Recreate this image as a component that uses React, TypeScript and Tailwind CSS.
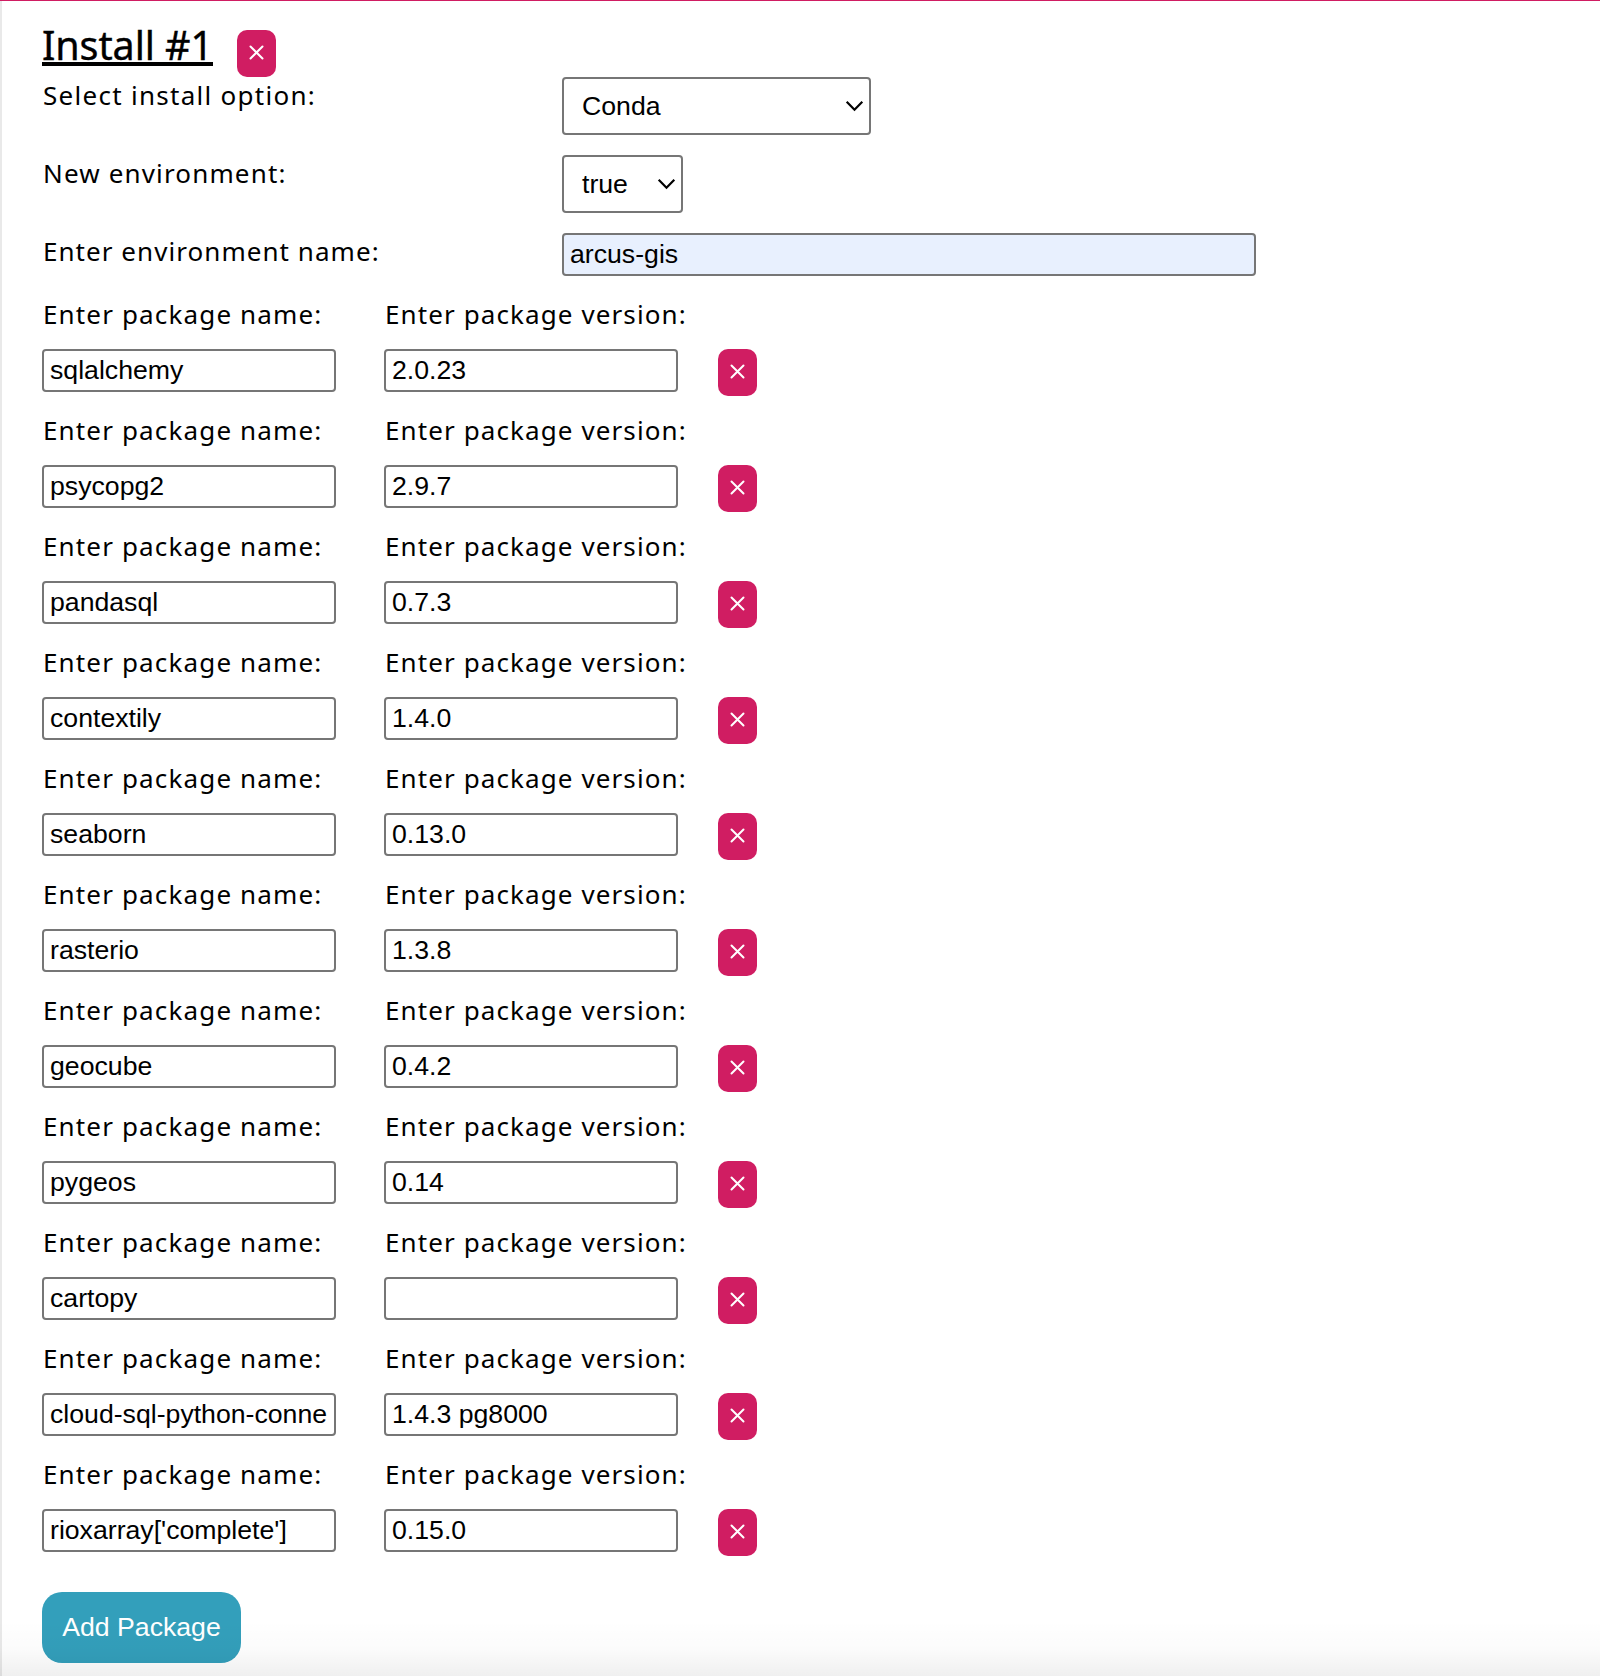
import { useState } from 'react';

type Pkg = { name: string; version: string };

const initialPackages: Pkg[] = [
  { name: 'sqlalchemy', version: '2.0.23' },
  { name: 'psycopg2', version: '2.9.7' },
  { name: 'pandasql', version: '0.7.3' },
  { name: 'contextily', version: '1.4.0' },
  { name: 'seaborn', version: '0.13.0' },
  { name: 'rasterio', version: '1.3.8' },
  { name: 'geocube', version: '0.4.2' },
  { name: 'pygeos', version: '0.14' },
  { name: 'cartopy', version: '' },
  { name: 'cloud-sql-python-conne', version: '1.4.3 pg8000' },
  { name: "rioxarray['complete']", version: '0.15.0' },
];

const control =
  "rounded-[4px] border-2 border-[#767676] text-black outline-none font-['Liberation_Sans',Arial,sans-serif] text-[26.67px]";

function RemoveButton({ onClick }: { onClick?: () => void }) {
  return (
    <button
      type="button"
      aria-label="Remove"
      onClick={onClick}
      className="flex h-[47px] w-[39px] shrink-0 items-center justify-center rounded-[10px] bg-[#d01d62] text-white"
    >
      <svg width="15" height="15" viewBox="0 0 15 15" fill="none" stroke="currentColor" strokeWidth="2" strokeLinecap="round" className="-mt-0.5">
        <path d="M1.5 1.5L13.5 13.5M13.5 1.5L1.5 13.5" />
      </svg>
    </button>
  );
}

function Select({ value, className }: { value: string; className: string }) {
  return (
    <div className={`flex h-[58px] items-center justify-between bg-white pl-[18px] pr-[5px] ${control} ${className}`}>
      <span className="leading-[30px]">{value}</span>
      <svg width="19" height="12" viewBox="0 0 19 12" fill="none" stroke="currentColor" strokeWidth="2.2" className="-mt-px">
        <path d="M1.7 1.7L9.5 9.7L17.3 1.7" />
      </svg>
    </div>
  );
}

function Input({ value, className }: { value: string; className: string }) {
  return (
    <div className={`h-[43px] px-[6px] ${control} ${className}`}>
      <div className="h-[39px] whitespace-nowrap leading-[39px]">{value}</div>
    </div>
  );
}

export default function App() {
  const [packages, setPackages] = useState(initialPackages);

  return (
    <main className="relative h-[1676px] w-[1600px] overflow-hidden border-t border-[#d01d62] bg-white font-['Noto_Sans',sans-serif] text-[26px] leading-[36px] text-black">
      <div className="h-full border-l-2 border-[#e9e9e9] pl-[40px] pt-[29px]">
        <div className="flex h-[47px] items-start">
          <h1 className="mt-[-10px] h-[46px] w-[171px] whitespace-nowrap border-b-4 border-black text-[39.5px] leading-[50px] tracking-[-0.1px] [-webkit-text-stroke:0.4px_black]">
            Install #1
          </h1>
          <div className="ml-[24px]">
            <RemoveButton />
          </div>
        </div>

        <div className="grid grid-cols-[520px_1fr] grid-rows-[78px_78px_43px]">
          <span className="pl-px tracking-[1.28px]">Select install option:</span>
          <Select value="Conda" className="w-[309px]" />
          <span className="pl-px tracking-[1.15px]">New environment:</span>
          <Select value="true" className="w-[121px]" />
          <span className="pl-px tracking-[1.05px]">Enter environment name:</span>
          <Input value="arcus-gis" className="w-[694px] bg-[#e8f0fe]" />
        </div>

        <div className="mt-[20px]">
          {packages.map((pkg, i) => (
            <div key={i} className="flex h-[116px]">
              <div className="w-[342px]">
                <div className="h-[53px] whitespace-nowrap pl-px tracking-[1.15px]">Enter package name:</div>
                <Input value={pkg.name} className="w-[294px]" />
              </div>
              <div className="w-[334px]">
                <div className="h-[53px] whitespace-nowrap pl-px tracking-[1.1px]">Enter package version:</div>
                <Input value={pkg.version} className="w-[294px]" />
              </div>
              <div className="pt-[53px]">
                <RemoveButton onClick={() => setPackages(packages.filter((_, j) => j !== i))} />
              </div>
            </div>
          ))}
        </div>

        <button
          type="button"
          onClick={() => setPackages([...packages, { name: '', version: '' }])}
          className="mt-[20px] h-[71px] w-[199px] rounded-[20px] bg-[#339fbb] pb-[2px] font-['Liberation_Sans',Arial,sans-serif] text-[26.67px] text-white"
        >
          Add Package
        </button>
      </div>
      <div className="pointer-events-none absolute inset-x-0 bottom-0 h-[56px] bg-linear-to-b from-black/0 via-black/[0.015] to-black/[0.06]" />
    </main>
  );
}
